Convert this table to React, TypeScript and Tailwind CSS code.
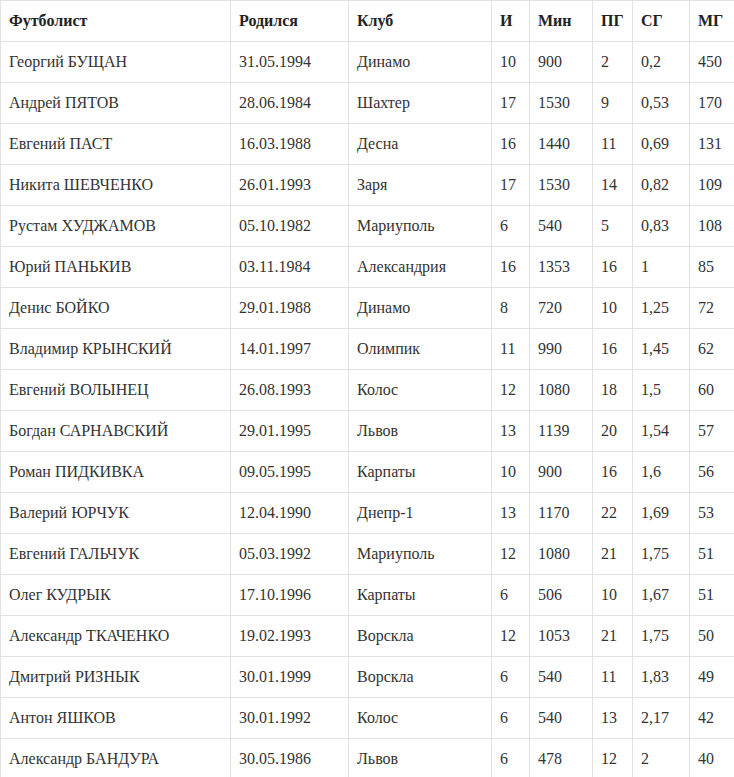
const rows = [
    ['Георгий БУЩАН', '31.05.1994', 'Динамо', '10', '900', '2', '0,2', '450'],
    ['Андрей ПЯТОВ', '28.06.1984', 'Шахтер', '17', '1530', '9', '0,53', '170'],
    ['Евгений ПАСТ', '16.03.1988', 'Десна', '16', '1440', '11', '0,69', '131'],
    ['Никита ШЕВЧЕНКО', '26.01.1993', 'Заря', '17', '1530', '14', '0,82', '109'],
    ['Рустам ХУДЖАМОВ', '05.10.1982', 'Мариуполь', '6', '540', '5', '0,83', '108'],
    ['Юрий ПАНЬКИВ', '03.11.1984', 'Александрия', '16', '1353', '16', '1', '85'],
    ['Денис БОЙКО', '29.01.1988', 'Динамо', '8', '720', '10', '1,25', '72'],
    ['Владимир КРЫНСКИЙ', '14.01.1997', 'Олимпик', '11', '990', '16', '1,45', '62'],
    ['Евгений ВОЛЫНЕЦ', '26.08.1993', 'Колос', '12', '1080', '18', '1,5', '60'],
    ['Богдан САРНАВСКИЙ', '29.01.1995', 'Львов', '13', '1139', '20', '1,54', '57'],
    ['Роман ПИДКИВКА', '09.05.1995', 'Карпаты', '10', '900', '16', '1,6', '56'],
    ['Валерий ЮРЧУК', '12.04.1990', 'Днепр-1', '13', '1170', '22', '1,69', '53'],
    ['Евгений ГАЛЬЧУК', '05.03.1992', 'Мариуполь', '12', '1080', '21', '1,75', '51'],
    ['Олег КУДРЫК', '17.10.1996', 'Карпаты', '6', '506', '10', '1,67', '51'],
    ['Александр ТКАЧЕНКО', '19.02.1993', 'Ворскла', '12', '1053', '21', '1,75', '50'],
    ['Дмитрий РИЗНЫК', '30.01.1999', 'Ворскла', '6', '540', '11', '1,83', '49'],
    ['Антон ЯШКОВ', '30.01.1992', 'Колос', '6', '540', '13', '2,17', '42'],
    ['Александр БАНДУРА', '30.05.1986', 'Львов', '6', '478', '12', '2', '40'],
];

const headers = ['Футболист', 'Родился', 'Клуб', 'И', 'Мин', 'ПГ', 'СГ', 'МГ'];
const widths = [230, 118, 143, 38, 63, 40, 57, 45];

export default function App() {
    return (
        <div className="bg-white [font-family:'Liberation_Serif',serif] text-[16px] text-[#333]">
            <table className="w-[734px] table-fixed border-collapse">
                <colgroup>
                    {widths.map((w, i) => (
                        <col key={i} style={{ width: w }} />
                    ))}
                </colgroup>
                <thead>
                    <tr>
                        {headers.map((h) => (
                            <th
                                key={h}
                                className="h-[41px] border border-[#e1e1e1] px-2 text-left align-middle font-bold text-[#222]"
                            >
                                {h}
                            </th>
                        ))}
                    </tr>
                </thead>
                <tbody>
                    {rows.map((row, r) => (
                        <tr key={r}>
                            {row.map((cell, c) => (
                                <td
                                    key={c}
                                    className="h-[41px] border border-[#e1e1e1] px-2 align-middle whitespace-nowrap"
                                >
                                    {cell}
                                </td>
                            ))}
                        </tr>
                    ))}
                </tbody>
            </table>
        </div>
    );
}
